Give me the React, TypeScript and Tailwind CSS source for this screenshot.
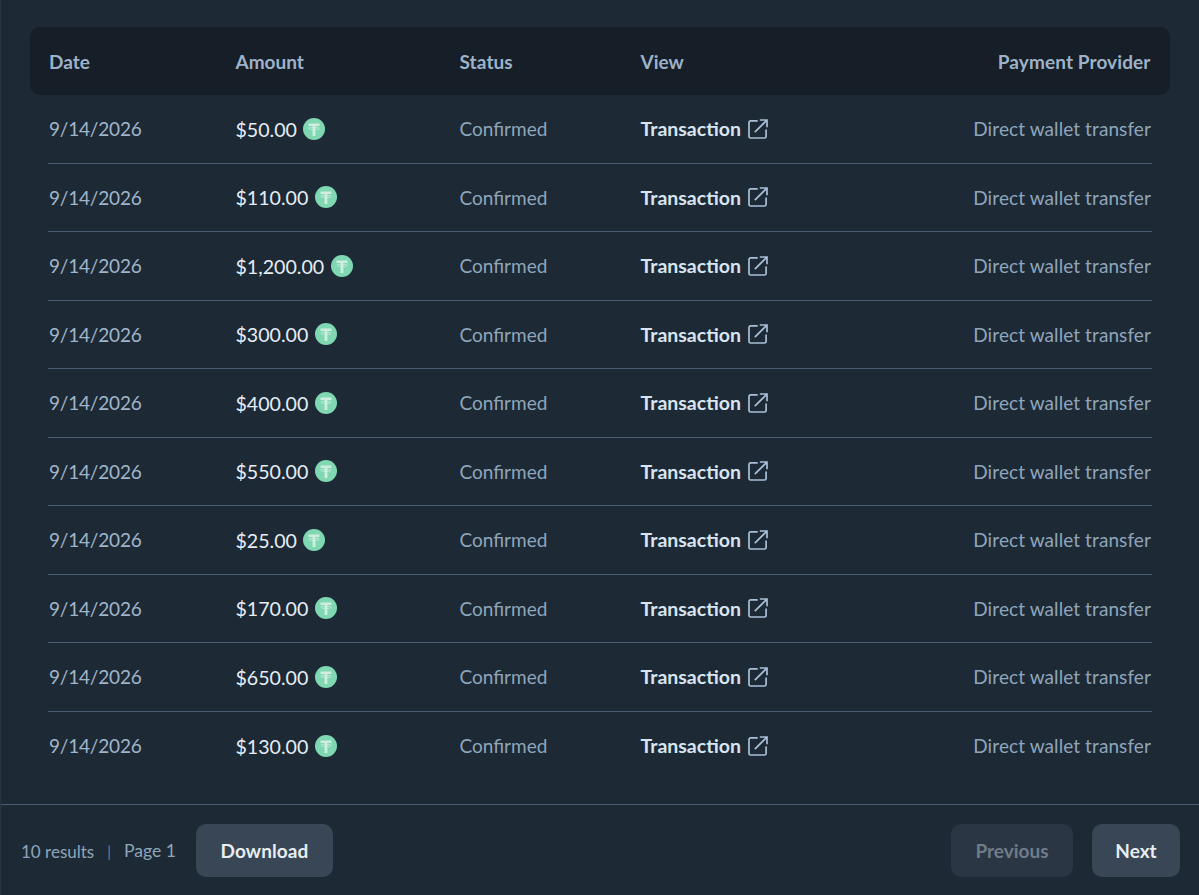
import { ReactNode } from 'react';

const amounts = ['$50.00', '$110.00', '$1,200.00', '$300.00', '$400.00', '$550.00', '$25.00', '$170.00', '$650.00', '$130.00'];

const cols = 'grid grid-cols-[186.5px_224px_181px_1fr_auto] items-center';

function TetherIcon() {
  return (
    <svg width="22" height="22" viewBox="0 0 22 22" className="shrink-0">
      <circle cx="11" cy="11" r="11" fill="#7fd8b2" />
      <path d="M5.5 5.5h11v2.6h-4.1V18H9.6V8.1H5.5z" fill="#cfeee0" />
      <ellipse cx="11" cy="10.4" rx="5.2" ry="1.1" fill="none" stroke="#cfeee0" strokeWidth="0.7" />
    </svg>
  );
}

function LinkIcon() {
  return (
    <svg width="20" height="20" viewBox="0 0 20 20" fill="none" stroke="#a9c0d8" strokeWidth="1.7" className="shrink-0">
      <path d="M9 1.9H2.6a1.6 1.6 0 0 0-1.6 1.6v13.9a1.6 1.6 0 0 0 1.6 1.6h13.9a1.6 1.6 0 0 0 1.6-1.6V11" strokeLinecap="round" />
      <path d="M6.8 13.2 18.4 1.6M11.8 1h7.2v7.2" />
    </svg>
  );
}

function Button({ children, disabled, className }: { children: ReactNode; disabled?: boolean; className: string }) {
  return (
    <button
      disabled={disabled}
      className={`h-[53px] rounded-[10px] pt-[2px] text-[19px] font-bold ${disabled ? 'bg-[#2a3643] text-[#6f7c89]' : 'bg-[#384655] text-[#e8edf2]'} ${className}`}
    >
      {children}
    </button>
  );
}

export default function App() {
  return (
    <div className="w-[1199px] h-[895px] overflow-hidden bg-[#1d2a35] border-l border-[#2a3541] font-['Lato',sans-serif]">
      <div className="pt-[27px] pl-[29px] pr-[29px]">
        <div className={`${cols} h-[68px] rounded-[10px] bg-[#161e27] pl-[19px] pr-[19.5px] pt-[2px] text-[19px] font-bold text-[#9db2c8]`}>
          <span>Date</span>
          <span>Amount</span>
          <span className="tracking-[0.1px]">Status</span>
          <span>View</span>
          <span className="tracking-[0.1px]">Payment Provider</span>
        </div>
      </div>
      <div className="pl-[47px] pr-[47px]">
        {amounts.map((amount, i) => (
          <div
            key={i}
            className={`${cols} h-[68.5px] px-[1px] text-[19px] ${i < amounts.length - 1 ? 'border-b border-[#4a5c72]' : ''}`}
          >
            <span className="pt-[1px] tracking-[-0.2px] text-[#a0b5ca]">9/14/2026</span>
            <span className="flex items-center gap-[6.5px] text-[#e6edf5]">
              <span className="pt-[1px] text-[19.6px]">{amount}</span>
              <TetherIcon />
            </span>
            <span className="pt-[1px] text-[#8fa5bb]">Confirmed</span>
            <span className="flex items-center gap-[7px] font-bold text-[#d8e4f0]">
              <span className="text-[19.5px]">Transaction</span>
              <LinkIcon />
            </span>
            <span className="pt-[1px] tracking-[0.09px] text-[#8fa5bb]">Direct wallet transfer</span>
          </div>
        ))}
      </div>
      <div className="mt-[24px] flex h-[91px] items-start justify-between border-t border-[#4a5c72] pl-[20px] pr-[19px] pt-[19px]">
        <div className="flex h-[53px] items-center pt-[2px]">
          <span className="text-[17px] text-[#8fa5bb]">10 results</span>
          <span className="mx-[13px] text-[15px] text-[#6f8296]">|</span>
          <span className="text-[17.6px] text-[#8fa5bb]">Page 1</span>
          <Button className="-mt-[2px] ml-[20px] w-[137px] tracking-[0.1px]">Download</Button>
        </div>
        <div className="flex gap-[19px]">
          <Button disabled className="w-[122px]">Previous</Button>
          <Button className="w-[88px]">Next</Button>
        </div>
      </div>
    </div>
  );
}
